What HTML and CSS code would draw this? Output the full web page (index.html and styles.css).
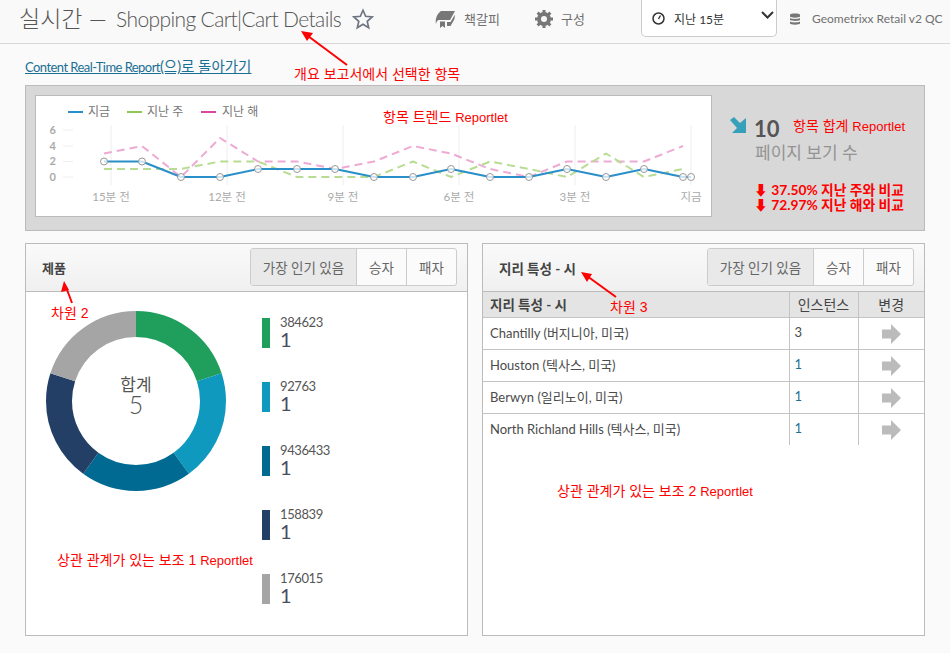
FILE: index.html
```html
<!DOCTYPE html>
<html lang="ko">
<head>
  <meta charset="UTF-8" />
  <meta name="viewport" content="width=device-width, initial-scale=1.0" />
  <title>실시간</title>
  <link rel="stylesheet" href="styles.css">
</head>
<body>

  <!-- Top bar -->
  <div class="top-bar">
    <h1>실시간 — <span class="crumb">Shopping Cart|Cart Details</span></h1>
    <svg class="star" width="22" height="22" viewBox="0 0 24 24"><path d="M12 2.500l2.900 6.600 7.100.7-5.400 4.700 1.600 7-6.200-3.700-6.200 3.700 1.600-7L2 9.800l7.100-.7z" fill="none" stroke="#6d7480" stroke-width="1.800"/></svg>
    <div class="tool bookmark">
      <svg width="21" height="18" viewBox="0 0 21 18"><path d="M6 1h14l-5 9H4C2.500 10 1.500 11.500 1 14 0 9 2 4 6 1z" fill="#777"/><path d="M5 11.500h5V18l-2.500-2L5 18z" fill="#777"/><path d="M12 12h3.500L20 4.500l-.5 4.500-4 7H12z" fill="#777"/></svg>
      <span>책갈피</span>
    </div>
    <div class="tool gear">
      <svg width="18" height="18" viewBox="0 0 18 18"><circle cx="9" cy="9" r="5" fill="none" stroke="#777" stroke-width="4"/><path d="M9 0v3M9 15v3M0 9h3M15 9h3M2.600 2.600l2.200 2.200M13.200 13.200l2.200 2.200M15.400 2.600l-2.200 2.200M4.800 13.200l-2.200 2.200" stroke="#777" stroke-width="3"/></svg>
      <span>구성</span>
    </div>
    <div class="range">
      <svg width="13" height="13" viewBox="0 0 13 13"><circle cx="6.500" cy="6.500" r="5.500" fill="none" stroke="#333" stroke-width="1.500"/><path d="M6.500 7L8.500 3.500" stroke="#333" stroke-width="1.400"/></svg>
      <span class="range-label">지난 15분</span>
      <svg class="chevron" width="13" height="8" viewBox="0 0 13 8"><path d="M1 1l5.500 5.500L12 1" fill="none" stroke="#333" stroke-width="2"/></svg>
    </div>
    <svg class="db" width="10" height="12" viewBox="0 0 10 12"><path d="M0 1.500C0 0 10 0 10 1.500V3.500C10 5 0 5 0 3.500zM0 5C2 6.200 8 6.200 10 5V7C8 8.200 2 8.200 0 7zM0 8.500C2 9.700 8 9.700 10 8.500V10.500C10 12 0 12 0 10.500z" fill="#777"/></svg>
    <span class="suite">Geometrixx Retail v2 QC</span>
  </div>

  <div class="content">
    <a href="#" class="back-link">Content Real-Time Report<span class="ko">(으)로 돌아가기</span></a>

    <!-- Trend + total -->
    <div class="summary">
      <div class="trend">
        <svg width="675" height="119" viewBox="36 96 675 119">
          <g class="legend">
            <path d="M68 112h15" stroke="#2a8fc9"/>
            <text x="88" y="116">지금</text>
            <path d="M127 112h15" stroke="#8fc750"/>
            <text x="147" y="116">지난 주</text>
            <path d="M201 112h15" stroke="#d9489f"/>
            <text x="222" y="116">지난 해</text>
          </g>
          <g class="grid-lines">
            <path d="M111 125v60M227 125v60M343 125v60M459 125v60M575 125v60M691 125v60"/>
            <path d="M63 130h10M63 146h10M63 161.500h10M63 177h10"/>
          </g>
          <g class="y-labels">
            <text x="56" y="134">6</text>
            <text x="56" y="150">4</text>
            <text x="56" y="165">2</text>
            <text x="56" y="181">0</text>
          </g>
          <g class="x-labels">
            <text x="111" y="201">15분 전</text>
            <text x="227" y="201">12분 전</text>
            <text x="343" y="201">9분 전</text>
            <text x="459" y="201">6분 전</text>
            <text x="575" y="201">3분 전</text>
            <text x="691" y="201">지금</text>
          </g>
          <polyline class="line-year" points="104,153.500 142,146 181,177 220,138 258,161.500 297,161.500 335,169 374,161.500 413,146 451,153.500 490,169 529,177 567,161.500 606,161.500 644,161.500 683,146"/>
          <polyline class="line-week" points="104,169 142,169 181,169 220,161.500 258,161.500 297,177 335,177 374,177 413,161.500 451,177 490,161.500 529,169 567,177 606,153.500 644,177 683,169"/>
          <polyline class="line-now" points="104,161.500 142,161.500 181,177 220,177 258,169 297,169 335,169 374,177 413,177 451,169 490,177 529,177 567,169 606,177 644,169 683,177 691,177"/>
          <g class="dots">
            <circle cx="104" cy="161.500" r="3.500"/><circle cx="142" cy="161.500" r="3.500"/><circle cx="181" cy="177" r="3.500"/><circle cx="220" cy="177" r="3.500"/>
            <circle cx="258" cy="169" r="3.500"/><circle cx="297" cy="169" r="3.500"/><circle cx="335" cy="169" r="3.500"/><circle cx="374" cy="177" r="3.500"/>
            <circle cx="413" cy="177" r="3.500"/><circle cx="451" cy="169" r="3.500"/><circle cx="490" cy="177" r="3.500"/><circle cx="529" cy="177" r="3.500"/>
            <circle cx="567" cy="169" r="3.500"/><circle cx="606" cy="177" r="3.500"/><circle cx="644" cy="169" r="3.500"/><circle cx="683" cy="177" r="3.500"/>
            <circle cx="691" cy="177" r="3.500"/>
          </g>
        </svg>
      </div>
      <div class="total">
        <div class="total-top">
          <svg width="18" height="17" viewBox="0 0 18 17"><path d="M0 4L4 1l6 6 6-5v15H2l5-5z" fill="#36a0bb"/></svg>
          <span class="total-num">10</span>
        </div>
        <div class="total-label">페이지 보기 수</div>
        <div class="compare">
          <div>⬇ 37.50% 지난 주와 비교</div>
          <div>⬇ 72.97% 지난 해와 비교</div>
        </div>
      </div>
    </div>

    <div class="panels">
      <!-- Product -->
      <div class="panel">
        <div class="panel-head">
          <h2>제품</h2>
          <div class="seg">
            <span class="active">가장 인기 있음</span><span>승자</span><span>패자</span>
          </div>
        </div>
        <div class="donut-body">
          <svg class="donut" width="180" height="180" viewBox="0 0 180 180">
            <g transform="rotate(-90 90 90)" fill="none" stroke-width="26">
              <circle cx="90" cy="90" r="77" pathLength="100" stroke="#209e5c" stroke-dasharray="20 80"/>
              <circle cx="90" cy="90" r="77" pathLength="100" stroke="#0f99bf" stroke-dasharray="20 80" stroke-dashoffset="-20"/>
              <circle cx="90" cy="90" r="77" pathLength="100" stroke="#006a92" stroke-dasharray="20 80" stroke-dashoffset="-40"/>
              <circle cx="90" cy="90" r="77" pathLength="100" stroke="#243f66" stroke-dasharray="20 80" stroke-dashoffset="-60"/>
              <circle cx="90" cy="90" r="77" pathLength="100" stroke="#a5a5a5" stroke-dasharray="20 80" stroke-dashoffset="-80"/>
            </g>
            <text class="donut-title" x="90" y="80">합계</text>
            <text class="donut-num" x="90" y="103">5</text>
          </svg>
          <ul class="key">
            <li><i class="c1"></i><div><span>384623</span><b>1</b></div></li>
            <li><i class="c2"></i><div><span>92763</span><b>1</b></div></li>
            <li><i class="c3"></i><div><span>9436433</span><b>1</b></div></li>
            <li><i class="c4"></i><div><span>158839</span><b>1</b></div></li>
            <li><i class="c5"></i><div><span>176015</span><b>1</b></div></li>
          </ul>
        </div>
      </div>

      <!-- Geo -->
      <div class="panel">
        <div class="panel-head">
          <h2 class="geo-title">지리 특성 - 시</h2>
          <div class="seg">
            <span class="active">가장 인기 있음</span><span>승자</span><span>패자</span>
          </div>
        </div>
        <table class="geo">
          <thead>
            <tr><th>지리 특성 - 시</th><th class="mid">인스턴스</th><th class="mid">변경</th></tr>
          </thead>
          <tbody>
            <tr><td>Chantilly (버지니아, 미국)</td><td>3</td><td class="go"><svg width="19" height="20" viewBox="0 0 19 20"><path d="M0 5.500h9V0l10 10-10 10v-5.500H0z" fill="#bbb"/></svg></td></tr>
            <tr><td>Houston (텍사스, 미국)</td><td class="link-num">1</td><td class="go"><svg width="19" height="20" viewBox="0 0 19 20"><path d="M0 5.500h9V0l10 10-10 10v-5.500H0z" fill="#bbb"/></svg></td></tr>
            <tr><td>Berwyn (일리노이, 미국)</td><td class="link-num">1</td><td class="go"><svg width="19" height="20" viewBox="0 0 19 20"><path d="M0 5.500h9V0l10 10-10 10v-5.500H0z" fill="#bbb"/></svg></td></tr>
            <tr><td>North Richland Hills (텍사스, 미국)</td><td class="link-num">1</td><td class="go"><svg width="19" height="20" viewBox="0 0 19 20"><path d="M0 5.500h9V0l10 10-10 10v-5.500H0z" fill="#bbb"/></svg></td></tr>
          </tbody>
        </table>
      </div>
    </div>
  </div>

  <!-- Red callouts on top of the screenshot -->
  <svg class="arrows" width="950" height="653" viewBox="0 0 950 653">
    <path d="M347 65L308 36" stroke="#f00" stroke-width="2"/>
    <path d="M301 31l12 2-6 8z" fill="#f00"/>
    <path d="M72 303L66 287" stroke="#f00" stroke-width="2"/>
    <path d="M64 281l5 9-8 2z" fill="#f00"/>
    <path d="M616 297L587 276" stroke="#f00" stroke-width="2"/>
    <path d="M581 272l11 2-5 8z" fill="#f00"/>
  </svg>
  <span class="note note-selected">개요 보고서에서 선택한 항목</span>
  <span class="note note-trend">항목 트렌드 <span class="lat">Reportlet</span></span>
  <span class="note note-total">항목 합계 <span class="lat">Reportlet</span></span>
  <span class="note note-dim2">차원 2</span>
  <span class="note note-dim3">차원 3</span>
  <span class="note note-sub1">상관 관계가 있는 보조 1 <span class="lat">Reportlet</span></span>
  <span class="note note-sub2">상관 관계가 있는 보조 2 <span class="lat">Reportlet</span></span>

</body>
</html>
```

FILE: styles.css
```css
* { box-sizing: border-box; }
body {
  margin: 0;
  height: 653px;
  overflow: hidden;
  position: relative;
  background: #fafafa;
  color: #4b4b4b;
  font-family: "Lato", "Noto Sans CJK KR", sans-serif;
  font-size: 13px;
}
.top-bar {
  height: 44px;
  display: flex;
  align-items: center;
  padding: 0 0 6px 19px;
  background: #f9f9f9;
  border-bottom: 1px solid #d8d8d8;
  white-space: nowrap;
}
.top-bar h1 {
  margin: 0;
  width: 322px;
  font-size: 23px;
  line-height: 30px;
  font-weight: 300;
  color: #555;
}
.crumb { margin-left: 3px; font-size: 21px; letter-spacing: -0.62px; }
.star { margin-left: 11px; }
.tool {
  display: flex;
  align-items: center;
  gap: 8px;
  color: #707070;
  font-size: 13px;
}
.bookmark { margin-left: 61px; width: 100px; }
.gear { width: 106px; }
.range {
  width: 136px;
  height: 37px;
  display: flex;
  align-items: center;
  padding: 0 2px 0 10px;
  background: #fff;
  border: 1px solid #ccc;
  border-top: 0;
  border-radius: 0 0 5px 5px;
  color: #333;
  font-size: 12px;
}
.range-label { margin-left: 9px; flex: 1; }
.chevron { margin-top: -6px; }
.db { margin-left: 13px; }
.suite { margin-left: 12px; color: #707070; font-size: 12px; }

.content { padding: 0 25px; }
.back-link {
  display: block;
  height: 41px;
  padding-top: 11px;
  color: #1a6f95;
  font-size: 13px;
  letter-spacing: -0.55px;
  text-decoration: underline;
}
.ko { font-size: 14.500px; letter-spacing: 0; }
.summary {
  height: 146px;
  display: flex;
  padding: 9px;
  background: #d8d8d8;
  border: 1px solid #bbb;
}
.trend {
  width: 677px;
  height: 122px;
  background: #fff;
  border: 1px solid #bbb;
}
.trend svg { display: block; }
.legend path { stroke-width: 2; }
.legend text { fill: #777; font-size: 12px; }
.grid-lines path { stroke: #eee; fill: none; }
.y-labels text { fill: #aaa; font-size: 11px; font-weight: 700; text-anchor: end; }
.x-labels text { fill: #aaa; font-size: 11.500px; text-anchor: middle; }
.trend polyline { fill: none; stroke-linejoin: round; }
.line-now { stroke: #2a8fc9; stroke-width: 2; }
.line-week { stroke: #b9dc93; stroke-width: 2; stroke-dasharray: 8 5; }
.line-year { stroke: #eeaad4; stroke-width: 2; stroke-dasharray: 8 5; }
.dots circle { fill: rgba(255,255,255,0.75); stroke: #999; stroke-width: 1; }

.total { padding: 21px 0 0 18px; flex: 1; }
.total-top { display: flex; align-items: flex-start; gap: 6px; height: 25px; }
.total-num { font-size: 22px; font-weight: 700; line-height: 25px; color: #555; }
.total-label { font-size: 17px; color: #939393; line-height: 24px; margin-left: 25px; }
.compare {
  margin: 17px 0 0 24px;
  color: #f00;
  font-size: 13.800px;
  font-weight: 700;
  line-height: 15px;
  white-space: nowrap;
}

.panels {
  display: grid;
  grid-template-columns: 443px 443px;
  gap: 14px;
  margin-top: 12px;
}
.panel {
  height: 393px;
  background: #fff;
  border: 1px solid #bbb;
}
.panel-head {
  height: 48px;
  display: flex;
  align-items: center;
  justify-content: space-between;
  padding: 0 10px 0 16px;
  background: linear-gradient(#fafafa, #f0f0f0);
  border-bottom: 1px solid #bbb;
}
.panel-head h2 { margin: 0; font-size: 13px; font-weight: 700; color: #444; }
.panel-head .geo-title { font-size: 13.500px; }
.seg {
  display: flex;
  height: 38px;
  margin-top: -1px;
  padding-bottom: 2px;
  background: #fbfbfb;
  border: 1px solid #ccc;
  border-radius: 3px;
  font-size: 13.500px;
  color: #666;
}
.seg span {
  width: 50px;
  display: flex;
  align-items: center;
  justify-content: center;
  border-left: 1px solid #ccc;
  margin-bottom: -2px;
}
.seg .active { width: 105px; border-left: 0; background: #e9e9e9; }

.donut-body { position: relative; display: flex; padding: 19px 0 0 20px; }
.donut { display: block; }
.donut-title { fill: #555; font-size: 17px; text-anchor: middle; }
.donut-num { fill: #555; font-size: 25px; font-weight: 300; text-anchor: middle; }
.key { list-style: none; margin: 7px 0 0 36px; padding: 0; }
.key li { display: flex; gap: 10px; height: 64px; }
.key i { display: block; width: 8px; height: 30px; }
.key div { margin-top: -2px; }
.key span { display: block; font-size: 13px; letter-spacing: -0.4px; line-height: 13px; color: #555; }
.key b { display: block; font-size: 20px; line-height: 21px; font-weight: 400; color: #4a5060; }
.c1 { background: #209e5c; }
.c2 { background: #0f99bf; }
.c3 { background: #006a92; }
.c4 { background: #243f66; }
.c5 { background: #a5a5a5; }

.geo { width: 100%; border-collapse: collapse; table-layout: fixed; font-size: 13px; }
.geo th {
  height: 25px;
  padding: 0 7px;
  background: #e4e4e4;
  border-bottom: 1px solid #c4c4c4;
  border-left: 1px solid #c4c4c4;
  text-align: left;
  font-size: 13.500px;
  font-weight: 700;
  color: #444;
}
.geo th:first-child, .geo td:first-child { width: 306px; border-left: 0; }
.geo th:nth-child(2) { width: 69px; }
.geo th.mid { text-align: center; padding: 0; font-size: 14px; font-weight: 400; }
.geo td {
  height: 32px;
  padding: 0 5px 2px;
  border-bottom: 1px solid #c4c4c4;
  border-left: 1px solid #c4c4c4;
  color: #4b4b4b;
}
.geo td:first-child { padding-left: 7px; }
.geo tr:last-child td { border-bottom: 0; }
.geo .link-num { color: #1a6f95; }
.geo .go { text-align: center; padding: 5px 0 0; }

/* callouts */
.arrows { position: absolute; top: 0; left: 0; pointer-events: none; }
.note {
  position: absolute;
  color: #f00;
  font-family: "Liberation Sans", "Noto Sans CJK KR", sans-serif;
  font-size: 14px;
  line-height: 14px;
  white-space: nowrap;
}
.lat { font-size: 13px; }
.note-selected { left: 294px; top: 67px; }
.note-trend { left: 383px; top: 110px; }
.note-total { left: 793px; top: 119px; }
.note-dim2 { left: 51px; top: 306px; }
.note-dim3 { left: 610px; top: 300px; }
.note-sub1 { left: 57px; top: 553px; }
.note-sub2 { left: 557px; top: 484px; }
```
